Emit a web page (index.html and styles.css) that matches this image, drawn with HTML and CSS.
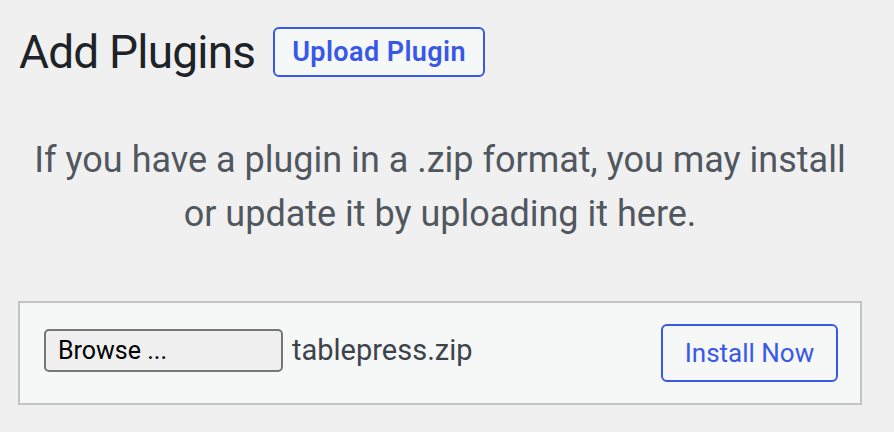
FILE: index.html
```html
<!DOCTYPE html>
<html lang="en">
<head>
<meta charset="utf-8">
<title>Add Plugins</title>
<link rel="stylesheet" href="styles.css">
</head>
<body>
<div class="wrap">
  <div class="head">
    <h1 class="title">Add Plugins</h1>
    <a class="btn-upload" href="#">Upload Plugin</a>
  </div>
  <p class="help">If you have a plugin in a .zip format, you may install or update it by uploading it here.</p>
  <form class="upload-box">
    <button type="button" class="browse">Browse ...</button>
    <span class="filename">tablepress.zip</span>
    <button type="button" class="install">Install Now</button>
  </form>
</div>
</body>
</html>
```
FILE: styles.css
```css
html, body {
  margin: 0;
  padding: 0;
}
body {
  background: #f0f0f1;
  font-family: Roboto, "Noto Sans", sans-serif;
  width: 894px;
  height: 432px;
  overflow: hidden;
}
.wrap {
  padding: 27px 32px 0 18px;
}
.head {
  display: flex;
  align-items: center;
  gap: 18px;
  height: 50px;
  padding-left: 1px;
}
.title {
  margin: 0;
  font-size: 46px;
  font-weight: 400;
  letter-spacing: -0.8px;
  color: #1d2327;
  line-height: 50px;
}
.btn-upload {
  box-sizing: border-box;
  height: 50px;
  display: flex;
  align-items: center;
  padding: 0 17px;
  border: 2px solid #3858e9;
  border-radius: 6px;
  background: #f6f7f7;
  color: #3858e9;
  font-size: 27px;
  font-weight: 600;
  letter-spacing: 0.4px;
  text-decoration: none;
}
.help {
  margin: 0;
  padding-top: 56px;
  font-size: 36px;
  line-height: 54px;
  color: #50575e;
  text-align: center;
}
.upload-box {
  box-sizing: border-box;
  margin-top: 60px;
  height: 104px;
  border: 2px solid #c3c4c7;
  background: #f6f7f7;
  display: flex;
  align-items: center;
  padding: 0 22px 0 24px;
}
.browse {
  box-sizing: border-box;
  width: 239px;
  height: 43px;
  margin-top: -5px;
  border: 2px solid #767676;
  border-radius: 5px;
  background: #efefef;
  color: #000;
  font-family: inherit;
  font-size: 25px;
  text-align: left;
  padding: 0 0 0 12px;
}
.filename {
  margin-left: 9px;
  margin-top: -6px;
  font-size: 29px;
  color: #3c434a;
}
.install {
  box-sizing: border-box;
  margin-left: auto;
  height: 58px;
  width: 177px;
  border: 2px solid #3858e9;
  border-radius: 6px;
  background: #f6f7f7;
  color: #3858e9;
  font-family: inherit;
  font-size: 26px;
  font-weight: 400;
  padding: 0;
}
```
